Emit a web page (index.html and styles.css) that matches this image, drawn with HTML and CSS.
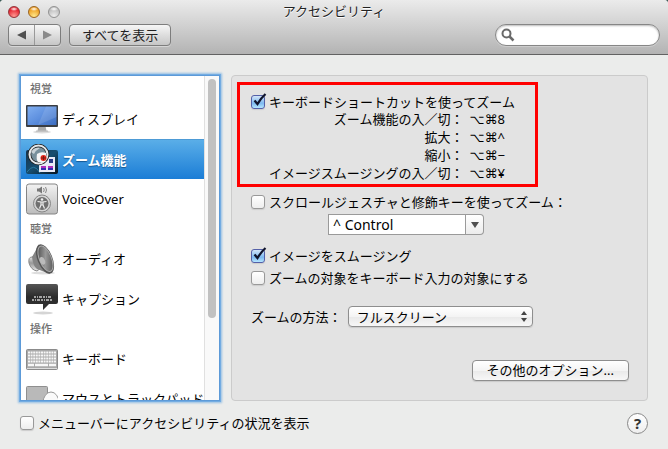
FILE: index.html
```html
<!DOCTYPE html>
<html lang="ja">
<head>
	<meta charset="UTF-8">
	<title>アクセシビリティ</title>
	<link rel="stylesheet" href="styles.css">
</head>

<body>
<div class="window">
	<header class="titlebar">
		<div class="title-row">
			<div class="lights">
				<button class="light red" aria-label="閉じる"></button>
				<button class="light yellow" aria-label="しまう"></button>
				<button class="light gray" aria-label="拡大" disabled></button>
			</div>
			<h1>アクセシビリティ</h1>
		</div>
		<div class="toolbar">
			<div class="nav">
				<button aria-label="戻る"><svg width="9" height="10"><path d="M0 5 9 0.5V9.5Z" fill="#505050"/></svg></button>
				<button aria-label="進む"><svg width="9" height="10"><path d="M9 5 0 0.5V9.5Z" fill="#8a8a8a"/></svg></button>
			</div>
			<button class="show-all">すべてを表示</button>
			<label class="search">
				<svg width="14" height="14" fill="none" stroke="#6a6a6a"><circle cx="5.5" cy="5.5" r="4" stroke-width="2"/><path d="M8.5 8.5 12.5 12.5" stroke-width="2.5"/></svg>
				<input type="search" aria-label="検索">
			</label>
		</div>
	</header>

	<main class="content">
		<nav class="sidebar">
			<div class="list">
				<h2>視覚</h2>
				<a href="#" class="item">
					<svg class="icon" viewBox="0 0 32 32">
						<defs><linearGradient id="screen" x2="1" y2="1"><stop stop-color="#80aef0"/><stop offset=".5" stop-color="#5e90df"/><stop offset="1" stop-color="#3b6cc0"/></linearGradient></defs>
						<ellipse cx="16" cy="29" rx="9" ry="1.500" fill="#ddd"/>
						<path d="M12.500 23H19.500L20.500 28H11.500Z" fill="#aaa"/>
						<path d="M10 27.500H22V29H10Z" fill="#c4c4c4"/>
						<rect y="2" width="32" height="22" rx="1" fill="#3a3d42"/>
						<rect x="1.500" y="3.500" width="29" height="18.500" fill="url(#screen)"/>
						<path d="M20 3.500H30.500V14L12 22Z" fill="#fff" opacity=".12"/>
					</svg>
					<span>ディスプレイ</span>
				</a>
				<a href="#" class="item selected">
					<svg class="icon" viewBox="0 0 32 32">
						<defs><linearGradient id="desk" x2="1" y2="1"><stop stop-color="#16324a"/><stop offset=".5" stop-color="#174e70"/><stop offset="1" stop-color="#06131f"/></linearGradient></defs>
						<rect y="6" width="32" height="24" rx="2" fill="url(#desk)"/>
						<path d="M1 28Q8 18 14 29" stroke="#2b7ca1" fill="none"/>
						<rect x="13" y="13" width="16" height="15" fill="#e9eaf6"/>
						<path d="M15 22h5v4h-5zM22 22h5v4h-5z" fill="#b02dbb"/>
						<path d="M15 24h5v2h-5zM22 24h5v2h-5z" fill="#352cae"/>
						<path d="M23 15h4v4h-4z" fill="#293a86"/>
						<circle cx="12.500" cy="10.500" r="9" fill="#78909c" stroke="#222" stroke-width="3.500"/>
						<circle cx="12.500" cy="10.500" r="9" fill="none" stroke="#e4e8eb" stroke-width="2"/>
						<path d="M11 10Q15 7 20 9V14L19 18H12Q10 16 11 10Z" fill="#f5f5f5"/>
						<circle cx="17.500" cy="14" r="3" fill="#e5281b"/>
						<path d="M15 14h5M17.500 12v4" stroke="#791c15"/>
						<path d="M5 8Q8 3 14 4Q10 6 8 10Z" fill="#fff" opacity=".6"/>
					</svg>
					<span>ズーム機能</span>
				</a>
				<a href="#" class="item">
					<svg class="icon" viewBox="0 0 32 32">
						<defs><linearGradient id="plate" x2="0" y2="1"><stop stop-color="#f2f2f2"/><stop offset="1" stop-color="#bcbcbc"/></linearGradient></defs>
						<rect x=".5" y="1" width="31" height="30" rx="2.500" fill="url(#plate)" stroke="#858585"/>
						<path d="M11 5.500h2l3-2v7l-3-2h-2z" fill="#777"/>
						<path d="M17.500 5q1.500 2 0 4M19.500 4q2 3 0 6" fill="none" stroke="#888"/>
						<circle cx="16" cy="20.500" r="8.500" fill="#d5d5d5" stroke="#858585"/>
						<circle cx="16" cy="20.500" r="6.500" fill="#707070"/>
						<circle cx="16" cy="16.500" r="1.300" fill="#eee"/>
						<path d="M11.500 18.500 15 19V22L13.500 25.500M20.500 18.500 17 19V22L18.500 25.500M15 19h2v3h-2z" fill="none" stroke="#eee" stroke-width="1.200"/>
					</svg>
					<span>VoiceOver</span>
				</a>
				<h2>聴覚</h2>
				<a href="#" class="item">
					<svg class="icon" viewBox="0 0 32 32">
						<defs>
							<linearGradient id="cone" x2="1" y2="1"><stop stop-color="#3e3e3e"/><stop offset=".5" stop-color="#999"/><stop offset="1" stop-color="#444"/></linearGradient>
							<linearGradient id="magnet" x2="0" y2="1"><stop stop-color="#fff"/><stop offset=".5" stop-color="#999"/><stop offset="1" stop-color="#e8e8e8"/></linearGradient>
						</defs>
						<ellipse cx="17" cy="30" rx="12" ry="1.500" fill="#ddd"/>
						<path d="M6 14Q2 14 3 20Q5 27 11 28L15 25V12Z" fill="url(#magnet)" stroke="#888"/>
						<path d="M13 1Q9 9 6 14Q7 23 11 26L24 31Z" fill="#858585"/>
						<ellipse cx="19" cy="16" rx="7.500" ry="15.500" transform="rotate(-22 19 16)" fill="#555"/>
						<ellipse cx="19.500" cy="16" rx="6" ry="13.500" transform="rotate(-22 19 16)" fill="url(#cone)" stroke="#aaa"/>
						<ellipse cx="16.500" cy="18" rx="2.500" ry="4" transform="rotate(-22 16 18)" fill="#bbb"/>
					</svg>
					<span>オーディオ</span>
				</a>
				<a href="#" class="item">
					<svg class="icon" viewBox="0 0 32 32">
						<defs><linearGradient id="bubble" x2="0" y2="1"><stop stop-color="#555"/><stop offset=".5" stop-color="#2b2b2b"/><stop offset="1" stop-color="#333"/></linearGradient></defs>
						<ellipse cx="17" cy="30" rx="10" ry="1.500" fill="#d5d5d5"/>
						<path d="M2 1H30Q32 1 32 3V19Q32 21 30 21H23L17 27V21H2Q0 21 0 19V3Q0 1 2 1Z" fill="url(#bubble)"/>
						<path d="M8 14H26M6 17H27" stroke="#ccc" stroke-width="1.500" stroke-dasharray="2 1 1 1 3 1"/>
					</svg>
					<span>キャプション</span>
				</a>
				<h2>操作</h2>
				<a href="#" class="item">
					<svg class="icon" viewBox="0 0 32 32">
						<rect x=".5" y="6.500" width="31" height="20" rx="1" fill="#a9a9a9" stroke="#8b8b8b"/>
						<path d="M1 25.500H31" stroke="#ddd"/>
						<path d="M2 9.500H30M2 12.500H30M2 15.500H30M2 18.500H30" stroke="#f7f7f7" stroke-width="2" stroke-dasharray="2 .6"/>
						<path d="M2 22H8M9 22H22M23 22H30" stroke="#f7f7f7" stroke-width="2.500"/>
					</svg>
					<span>キーボード</span>
				</a>
				<a href="#" class="item">
					<svg class="icon" viewBox="0 0 32 32">
						<rect x=".5" y="3.500" width="21" height="24" rx="1" fill="#b9b9b9" stroke="#8f8f8f"/>
						<ellipse cx="25" cy="20" rx="8" ry="11" fill="#fafafa" stroke="#999"/>
					</svg>
					<span>マウスとトラックパッド</span>
				</a>
			</div>
			<div class="scroller"><div class="thumb"></div></div>
		</nav>

		<section class="panel">
			<div class="highlight">
				<label class="check"><input type="checkbox" checked>キーボードショートカットを使ってズーム</label>
				<dl class="shortcuts">
					<dt>ズーム機能の入／切：</dt><dd>⌥⌘8</dd>
					<dt>拡大：</dt><dd>⌥⌘^</dd>
					<dt>縮小：</dt><dd>⌥⌘−</dd>
					<dt>イメージスムージングの入／切：</dt><dd>⌥⌘¥</dd>
				</dl>
			</div>
			<div class="options">
				<label class="check"><input type="checkbox">スクロールジェスチャと修飾キーを使ってズーム：</label>
				<div class="combo">
					<input type="text" value="^ Control" aria-label="修飾キー">
					<button aria-label="修飾キーを選択"><svg width="8" height="6"><path d="M0 0H8L4 6Z" fill="#505050"/></svg></button>
				</div>
				<label class="check"><input type="checkbox" checked>イメージをスムージング</label>
				<label class="check target"><input type="checkbox">ズームの対象をキーボード入力の対象にする</label>
				<div class="method">
					<label for="method">ズームの方法：</label>
					<div class="popup">
						<select id="method"><option>フルスクリーン</option></select>
						<svg width="6" height="11"><path d="M3 0 6 4H0ZM0 7H6L3 11Z" fill="#444"/></svg>
					</div>
				</div>
				<button class="more">その他のオプション...</button>
			</div>
		</section>
	</main>

	<footer class="footer">
		<label class="check"><input type="checkbox">メニューバーにアクセシビリティの状況を表示</label>
		<button class="help" aria-label="ヘルプ">?</button>
	</footer>
</div>
</body>

</html>
```

FILE: styles.css
```css
* {
	box-sizing: border-box;
}
body {
	margin: 0;
	background: #3d5c57;
	font: 13px/18px "Noto Sans", "Noto Sans CJK JP", "DejaVu Sans", sans-serif;
	color: #000;
}
button, input, select {
	margin: 0;
	padding: 0;
	font: inherit;
	color: inherit;
}
.window {
	display: flex;
	flex-direction: column;
	height: 100vh;
	min-height: 440px;
	border-radius: 4px 4px 0 0;
	background: #ebeceb;
	overflow: hidden;
}

/* タイトルバー */
.titlebar {
	height: 55px;
	border-bottom: 1px solid #626262;
	background: linear-gradient(#ebebeb, #b3b3b3);
}
.title-row {
	display: grid;
	grid-template-columns: 1fr auto 1fr;
	align-items: center;
	height: 24px;
	padding: 0 8px;
}
.title-row h1 {
	margin: 0;
	padding-bottom: 2px;
	font-size: 13px;
	font-weight: normal;
	color: #222;
	text-shadow: 0 1px 0 #fff;
}
.lights {
	display: flex;
	gap: 8px;
}
.light {
	width: 12px;
	height: 12px;
	border: 1px solid #888;
	border-radius: 50%;
}
.red {
	border-color: #94353a;
	background: radial-gradient(ellipse 4px 2px at 50% 20%, #fff, transparent), radial-gradient(circle at 50% 90%, #ff9a93, #e3202d 70%);
}
.yellow {
	border-color: #9a6422;
	background: radial-gradient(ellipse 4px 2px at 50% 20%, #fff, transparent), radial-gradient(circle at 50% 90%, #ffe88a, #ee9f21 70%);
}
.gray {
	border-color: #929292;
	background: radial-gradient(ellipse 4px 2px at 50% 20%, #fff, transparent), radial-gradient(circle at 50% 90%, #eee, #bdbdbd 70%);
}
.toolbar {
	display: flex;
	gap: 8px;
	padding: 0 8px;
}
.nav, .show-all {
	height: 22px;
	border: 1px solid #7d7d7d;
	border-radius: 4px;
	background: linear-gradient(#f6f6f6, #c6c6c6);
	box-shadow: 0 1px 0 #d6d6d6;
}
.nav {
	display: flex;
	width: 53px;
}
.nav button {
	display: flex;
	flex: 1;
	align-items: center;
	justify-content: center;
	border: 0;
	background: none;
}
.nav button + button {
	border-left: 1px solid #999;
}
.show-all {
	padding: 0 12px;
	color: #222;
	line-height: 20px;
}
.search {
	display: flex;
	align-items: center;
	width: 165px;
	height: 22px;
	margin-left: auto;
	padding: 0 5px;
	border: 1px solid #868686;
	border-radius: 11px;
	background: #fff;
	box-shadow: inset 0 1px 2px #bbb, 0 1px 0 #ccc;
}
.search input {
	flex: 1;
	min-width: 0;
	border: 0;
	background: none;
	outline: 0;
}

/* 本体 */
.content {
	display: flex;
	flex: 1;
	gap: 11px;
	min-height: 0;
	padding: 20px 20px 0 20px;
}
.sidebar {
	display: flex;
	width: 200px;
	border: 1px solid #5c9ad8;
	background: #fff;
	box-shadow: 0 0 0 1px #73ace2, 0 0 2px 2px #95bfe4;
}
.list {
	flex: 1;
	min-width: 0;
	padding-top: 3px;
	overflow: hidden;
}
.list h2 {
	height: 20px;
	margin: 0;
	padding-left: 9px;
	font-size: 11px;
	font-weight: 500;
	line-height: 19px;
	color: #707070;
}
.item {
	display: flex;
	align-items: center;
	gap: 4px;
	height: 40px;
	padding-left: 5px;
	color: #000;
	text-decoration: none;
	white-space: nowrap;
}
.icon {
	flex: none;
	width: 32px;
	height: 32px;
}
.selected {
	border-top: 1px solid #4d9bd6;
	background: linear-gradient(#5aaee8, #1b7dd6);
	color: #fff;
	font-weight: bold;
	text-shadow: 0 1px 1px #155894;
}
.scroller {
	width: 15px;
	padding: 3px;
	border-left: 1px solid #e0e0e0;
	background: #f9f9f9;
}
.thumb {
	width: 8px;
	height: 75%;
	border-radius: 4px;
	background: #c1c1c1;
}
.panel {
	flex: 1;
	padding: 6px 5px 0 5px;
	border: 1px solid #cbcbcb;
	border-radius: 4px;
	background: #e3e3e3;
}
.highlight {
	width: 301px;
	padding: 8px 11px 2px;
	border: 3px solid #f00;
}
.shortcuts {
	display: grid;
	grid-template-columns: max-content auto;
	grid-auto-rows: 18px;
	column-gap: 6px;
	margin: 0 0 0 18px;
}
.shortcuts dt {
	text-align: right;
}
.shortcuts dd {
	margin: 0;
	font-family: "Noto Sans", "DejaVu Sans", sans-serif;
}

/* チェックボックス */
.check {
	display: flex;
	align-items: center;
	gap: 4px;
	height: 17px;
	white-space: nowrap;
}
.check input {
	position: relative;
	width: 14px;
	height: 14px;
	appearance: none;
	border: 1px solid #999;
	border-radius: 3px;
	background: linear-gradient(#fff, #eee);
	box-shadow: 0 1px 1px #ccc;
}
.check input:checked {
	border-color: #5460a8;
	background: linear-gradient(#d3e5f8, #7db9f0 60%, #b5e6ff);
}
.check input:checked::after {
	content: "";
	position: absolute;
	left: 1px;
	top: -3px;
	width: 14px;
	height: 14px;
	background: url("data:image/svg+xml,%3Csvg xmlns='http://www.w3.org/2000/svg' width='14' height='14'%3E%3Cpath d='M1.500 7.500 4.500 11Q8 5 12.500 1' fill='none' stroke='%2310142c' stroke-width='2.300'/%3E%3C/svg%3E");
}
.options {
	display: flex;
	flex-direction: column;
	align-items: flex-start;
	padding: 6px 13px 0 14px;
}
.combo {
	display: flex;
	width: 156px;
	height: 21px;
	margin: 4px 0 12px 77px;
}
.combo input {
	flex: 1;
	min-width: 0;
	padding: 0 4px;
	border: 1px solid #9a9a9a;
	background: #fff;
	font-size: 14px;
}
.combo button {
	display: flex;
	align-items: center;
	justify-content: center;
	width: 18px;
	border: 1px solid #9a9a9a;
	border-left: 0;
	border-radius: 0 4px 4px 0;
	background: linear-gradient(#fff, #ececec);
}
.target {
	margin-top: 5px;
}
.method {
	display: flex;
	align-items: center;
	gap: 6px;
	margin-top: 20px;
}
.popup {
	position: relative;
	width: 185px;
	height: 21px;
}
.popup select {
	width: 100%;
	height: 100%;
	padding-left: 8px;
	appearance: none;
}
.popup svg {
	position: absolute;
	right: 6px;
	top: 5px;
	pointer-events: none;
}
.popup select, .more {
	border: 1px solid #8e8e8e;
	border-radius: 4px;
	background: linear-gradient(#fff, #f4f4f4 50%, #e9e9e9 51%, #f7f7f7);
	box-shadow: 0 1px 1px #c9c9c9;
}
.more {
	align-self: flex-end;
	height: 21px;
	margin: 33px 0 0;
	padding: 0 14px;
	line-height: 19px;
}

/* フッター */
.footer {
	display: flex;
	align-items: center;
	justify-content: space-between;
	height: 48px;
	padding: 0 20px 4px;
}
.help {
	width: 21px;
	height: 21px;
	border: 1px solid #888;
	border-radius: 50%;
	background: linear-gradient(#fff, #eee);
	font-size: 15px;
	font-weight: bold;
	line-height: 19px;
	color: #333;
}
```
